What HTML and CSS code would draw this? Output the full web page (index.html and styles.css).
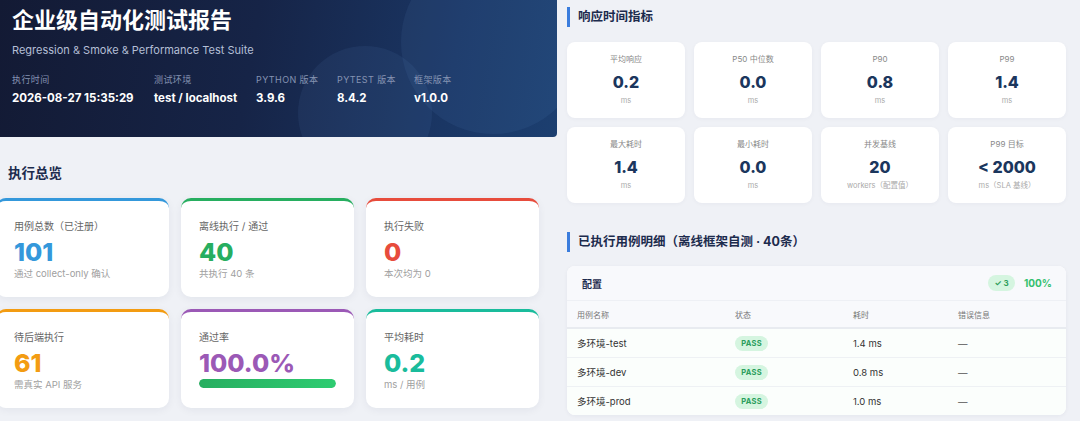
FILE: index.html
```html
<!DOCTYPE html>
<html lang="zh">
<head>
<meta charset="utf-8">
<title>企业级自动化测试报告</title>
<link rel="stylesheet" href="styles.css">
</head>
<body>
<div class="page">
  <div class="left">
    <header class="hero">
      <div class="circle big"></div>
      <div class="circle small"></div>
      <h1>企业级自动化测试报告</h1>
      <p class="subtitle">Regression &amp; Smoke &amp; Performance Test Suite</p>
      <div class="meta">
        <div class="meta-item m1"><div class="meta-label">执行时间</div><div class="meta-value">2026-08-27 15:35:29</div></div>
        <div class="meta-item m2"><div class="meta-label">测试环境</div><div class="meta-value">test / localhost</div></div>
        <div class="meta-item m3"><div class="meta-label">PYTHON 版本</div><div class="meta-value">3.9.6</div></div>
        <div class="meta-item m4"><div class="meta-label">PYTEST 版本</div><div class="meta-value">8.4.2</div></div>
        <div class="meta-item m5"><div class="meta-label">框架版本</div><div class="meta-value">v1.0.0</div></div>
      </div>
    </header>
    <section class="overview">
      <h2 class="ov-title">执行总览</h2>
      <div class="cards">
        <div class="card blue"><div class="c-label">用例总数（已注册）</div><div class="c-value">101</div><div class="c-sub">通过 collect-only 确认</div></div>
        <div class="card green"><div class="c-label">离线执行 / 通过</div><div class="c-value">40</div><div class="c-sub">共执行 40 条</div></div>
        <div class="card red"><div class="c-label">执行失败</div><div class="c-value">0</div><div class="c-sub">本次均为 0</div></div>
        <div class="card orange"><div class="c-label">待后端执行</div><div class="c-value">61</div><div class="c-sub">需真实 API 服务</div></div>
        <div class="card purple"><div class="c-label">通过率</div><div class="c-value">100.0%</div><div class="progress"><div class="progress-fill" style="width:100%"></div></div></div>
        <div class="card teal"><div class="c-label">平均耗时</div><div class="c-value">0.2</div><div class="c-sub">ms / 用例</div></div>
      </div>
    </section>
  </div>
  <div class="right">
    <h2 class="sec-title">响应时间指标</h2>
    <div class="metrics">
      <div class="metric"><div class="m-label">平均响应</div><div class="m-value">0.2</div><div class="m-unit">ms</div></div>
      <div class="metric"><div class="m-label">P50 中位数</div><div class="m-value">0.0</div><div class="m-unit">ms</div></div>
      <div class="metric"><div class="m-label">P90</div><div class="m-value">0.8</div><div class="m-unit">ms</div></div>
      <div class="metric"><div class="m-label">P99</div><div class="m-value">1.4</div><div class="m-unit">ms</div></div>
      <div class="metric"><div class="m-label">最大耗时</div><div class="m-value">1.4</div><div class="m-unit">ms</div></div>
      <div class="metric"><div class="m-label">最小耗时</div><div class="m-value">0.0</div><div class="m-unit">ms</div></div>
      <div class="metric"><div class="m-label">并发基线</div><div class="m-value">20</div><div class="m-unit">workers（配置值）</div></div>
      <div class="metric"><div class="m-label">P99 目标</div><div class="m-value">&lt; 2000</div><div class="m-unit">ms（SLA 基线）</div></div>
    </div>
    <h2 class="sec-title sec2">已执行用例明细（离线框架自测 · 40条）</h2>
    <div class="table-card">
      <div class="group-head">
        <span class="group-name">配置</span>
        <span class="group-stats"><span class="count-badge">✓ 3</span><span class="pct">100%</span></span>
      </div>
      <div class="row head-row"><span>用例名称</span><span>状态</span><span>耗时</span><span>错误信息</span></div>
      <div class="row"><span class="name">多环境-test</span><span><span class="pass">PASS</span></span><span>1.4 ms</span><span class="dash">—</span></div>
      <div class="row"><span class="name">多环境-dev</span><span><span class="pass">PASS</span></span><span>0.8 ms</span><span class="dash">—</span></div>
      <div class="row last"><span class="name">多环境-prod</span><span><span class="pass">PASS</span></span><span>1.0 ms</span><span class="dash">—</span></div>
    </div>
  </div>
</div>
</body>
</html>
```
FILE: styles.css
```css
html, body {
  margin: 0;
  padding: 0;
}
body {
  width: 1080px;
  height: 421px;
  overflow: hidden;
  background: #eff1f6;
  font-family: "Inter", "Noto Sans CJK SC", "Noto Sans", sans-serif;
  color: #333;
}
.page {
  display: grid;
  grid-template-columns: 557px 1fr;
  height: 421px;
}

/* ---------- hero ---------- */
.hero {
  position: relative;
  overflow: hidden;
  height: 137px;
  box-sizing: border-box;
  padding: 6px 12px 0;
  background: linear-gradient(100deg, #131a34 0%, #162447 45%, #1a3664 80%, #1c3f70 100%);
  border-bottom-right-radius: 4px;
  color: #fff;
}
.circle {
  position: absolute;
  border-radius: 50%;
  background: rgba(120, 160, 230, 0.08);
  pointer-events: none;
}
.circle.big {
  width: 184px;
  height: 184px;
  left: 401px;
  top: -50px;
}
.circle.small {
  width: 134px;
  height: 134px;
  left: 298px;
  top: 46px;
}
.hero h1 {
  position: relative;
  margin: 0;
  font-size: 22px;
  line-height: 28px;
  font-weight: 700;
}
.subtitle {
  position: relative;
  margin: 8px 0 0;
  font-size: 11px;
  line-height: 16px;
  color: #b4bfd6;
}
.meta {
  position: relative;
  display: flex;
  margin-top: 16px;
}
.m1 { width: 142px; }
.m2 { width: 102px; }
.m3 { width: 81px; }
.m4 { width: 77px; }
.meta-label {
  font-size: 9px;
  line-height: 12px;
  color: #8593b2;
  letter-spacing: 0.4px;
}
.meta-value {
  margin-top: 3px;
  font-size: 11.5px;
  line-height: 18px;
  font-weight: 700;
  color: #fff;
  white-space: nowrap;
}

/* ---------- overview ---------- */
.overview {
  padding: 26px 17px 0 8px;
}
.ov-title {
  margin: 0;
  font-size: 13.5px;
  line-height: 20px;
  font-weight: 700;
  color: #1c2b4d;
}
.cards {
  display: grid;
  grid-template-columns: repeat(3, 173px);
  grid-auto-rows: 99px;
  gap: 12px;
  margin: 15px 0 0 -12px;
}
.card {
  box-sizing: border-box;
  background: #fff;
  border-radius: 10px;
  border-top: 3px solid #3498db;
  padding: 18px 18px 0;
  box-shadow: 0 2px 8px rgba(25, 35, 70, 0.06);
}
.c-label {
  font-size: 10px;
  line-height: 14px;
  color: #666;
}
.c-value {
  margin-top: 4px;
  font-size: 25px;
  line-height: 30px;
  font-weight: 800;
}
.c-sub {
  font-size: 9.5px;
  line-height: 14px;
  color: #a0a0a0;
}
.card.blue { border-top-color: #3498db; }
.card.blue .c-value { color: #3498db; }
.card.green { border-top-color: #27ae60; }
.card.green .c-value { color: #27ae60; }
.card.red { border-top-color: #e74c3c; }
.card.red .c-value { color: #e74c3c; }
.card.orange { border-top-color: #f39c12; }
.card.orange .c-value { color: #f39c12; }
.card.purple { border-top-color: #9b59b6; }
.card.purple .c-value { color: #9b59b6; }
.card.teal { border-top-color: #1abc9c; }
.card.teal .c-value { color: #1abc9c; }
.progress {
  margin-top: 1px;
  height: 9px;
  border-radius: 5px;
  background: #e9ecef;
  overflow: hidden;
}
.progress-fill {
  height: 100%;
  border-radius: 5px;
  background: linear-gradient(90deg, #27ae60, #2ecc71);
}

/* ---------- right ---------- */
.right {
  padding: 7px 14px 0 10px;
}
.sec-title {
  margin: 0;
  border-left: 3px solid #3b7ddd;
  padding-left: 8px;
  font-size: 12.5px;
  line-height: 20px;
  font-weight: 700;
  color: #1c2b4d;
}
.sec2 {
  margin-top: 29px;
}
.metrics {
  display: grid;
  grid-template-columns: repeat(4, 118px);
  grid-auto-rows: 76px;
  gap: 9px 9px;
  margin-top: 15px;
}
.metric {
  box-sizing: border-box;
  background: #fff;
  border-radius: 8px;
  text-align: center;
  padding-top: 12px;
  box-shadow: 0 1px 4px rgba(25, 35, 70, 0.04);
}
.m-label {
  font-size: 8px;
  line-height: 10px;
  color: #888;
}
.m-value {
  margin-top: 7px;
  font-size: 16px;
  line-height: 22px;
  font-weight: 800;
  color: #1b365d;
}
.m-unit {
  margin-top: 3px;
  font-size: 7.5px;
  line-height: 10px;
  color: #aaa;
}

/* ---------- table ---------- */
.table-card {
  margin-top: 14px;
  width: 499px;
  background: #fff;
  border-radius: 8px;
  overflow: hidden;
  box-shadow: 0 1px 4px rgba(25, 35, 70, 0.05);
}
.group-head {
  display: flex;
  align-items: center;
  justify-content: space-between;
  height: 34px;
  padding: 0 14px 0 15px;
  background: #f8f9fc;
  border-bottom: 1px solid #eef0f5;
}
.group-name {
  font-size: 10px;
  font-weight: 700;
  color: #1c2b4d;
}
.group-stats {
  display: flex;
  align-items: center;
}
.count-badge {
  display: inline-flex;
  align-items: center;
  justify-content: center;
  width: 27px;
  height: 16px;
  border-radius: 8px;
  background: #d5f5e0;
  color: #2e9e5b;
  font-size: 8px;
  font-weight: 700;
}
.pct {
  margin-left: 9px;
  font-size: 10px;
  font-weight: 700;
  color: #34c06e;
}
.row {
  display: grid;
  grid-template-columns: 158px 118px 105px 1fr;
  align-items: center;
  height: 29px;
  box-sizing: border-box;
  padding: 0 10px;
  font-size: 9.5px;
  color: #333;
  background: #fbfefc;
  border-bottom: 1px solid #eef1f4;
}
.row.last {
  border-bottom: none;
  height: 28px;
}
.head-row {
  height: 28px;
  background: #f8f9fc;
  font-size: 8px;
  color: #777;
  border-bottom: 2px solid #e8ebf0;
}
.pass {
  display: inline-flex;
  align-items: center;
  justify-content: center;
  width: 33px;
  height: 15px;
  border-radius: 8px;
  background: #d5f5e0;
  color: #2a9d5c;
  font-size: 7.5px;
  font-weight: 700;
  letter-spacing: 0.3px;
}
.dash {
  color: #555;
}
```
